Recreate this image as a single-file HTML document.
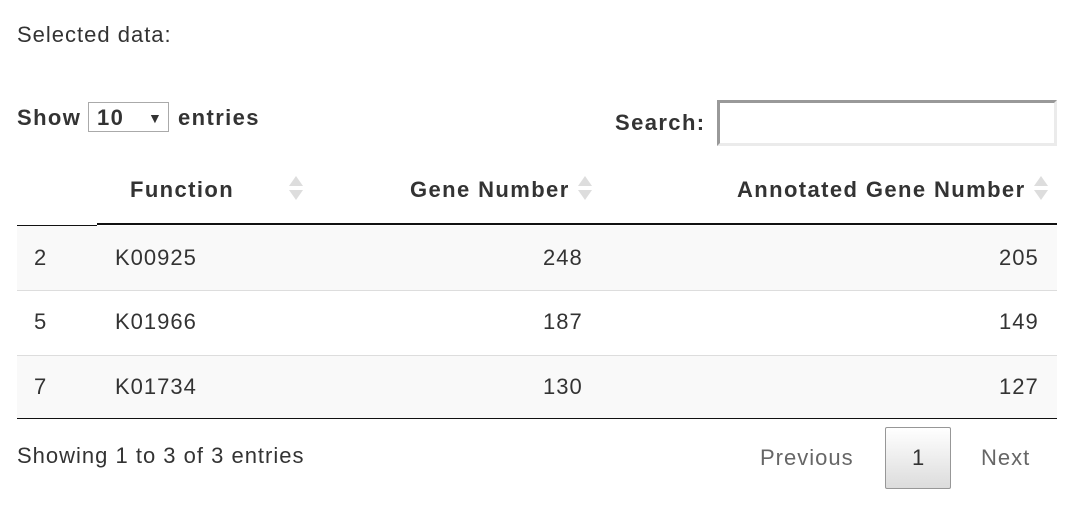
<!DOCTYPE html>
<html><head><style>
body{margin:0;width:1088px;height:519px;background:#fff;font-family:"Liberation Sans",sans-serif;color:#333;position:relative;overflow:hidden}
.a{position:absolute;white-space:nowrap;font-size:22px;line-height:26px;letter-spacing:1px}
b{font-weight:bold;letter-spacing:1.4px}
.row{position:absolute;left:17px;width:1040px;height:64px}
.s{position:absolute;width:0;height:0;border-left:7px solid transparent;border-right:7px solid transparent}
.u{border-bottom:10px solid #ddd}.d{border-top:10px solid #ddd}
</style></head><body>
<div class="a" style="left:17px;top:22px">Selected data:</div>
<div class="a" style="left:17px;top:105px"><b>Show</b></div>
<div style="position:absolute;left:88px;top:102px;width:81px;height:30px;border:1px solid #aaa;box-sizing:border-box"></div>
<div class="a" style="left:97px;top:105px"><b>10</b></div>
<div class="a" style="left:148px;top:105px;font-size:14px">▼</div>
<div class="a" style="left:178px;top:105px"><b>entries</b></div>
<div class="a" style="left:615px;top:110px"><b>Search:</b></div>
<div style="position:absolute;left:717px;top:100px;width:340px;height:46px;box-sizing:border-box;border:3px solid #ebebeb;border-top-color:#999;border-left-color:#999"></div>
<div class="a" style="left:130px;top:177px"><b>Function</b></div>
<div class="a" style="left:410px;top:177px"><b>Gene Number</b></div>
<div class="a" style="left:737px;top:177px"><b>Annotated Gene Number</b></div>
<div class="s u" style="left:289px;top:176px"></div><div class="s d" style="left:289px;top:190px"></div>
<div class="s u" style="left:578px;top:176px"></div><div class="s d" style="left:578px;top:190px"></div>
<div class="s u" style="left:1034px;top:176px"></div><div class="s d" style="left:1034px;top:190px"></div>
<div style="position:absolute;left:17px;width:80px;height:2px;background:#111;top:225px"></div>
<div style="position:absolute;left:97px;top:223px;width:960px;height:2px;background:#111"></div>
<div class="row" style="top:226px;background:#f9f9f9;border-bottom:1px solid #ddd"></div>
<div class="row" style="top:291px;border-bottom:1px solid #ddd"></div>
<div class="row" style="top:356px;height:62px;background:#f9f9f9;border-bottom:1px solid #111"></div>
<div class="a" style="left:34px;top:245px">2</div><div class="a" style="left:115px;top:245px">K00925</div><div class="a" style="left:543px;top:245px">248</div><div class="a" style="left:999px;top:245px">205</div>
<div class="a" style="left:34px;top:309px">5</div><div class="a" style="left:115px;top:309px">K01966</div><div class="a" style="left:543px;top:309px">187</div><div class="a" style="left:999px;top:309px">149</div>
<div class="a" style="left:34px;top:374px">7</div><div class="a" style="left:115px;top:374px">K01734</div><div class="a" style="left:543px;top:374px">130</div><div class="a" style="left:999px;top:374px">127</div>
<div class="a" style="left:17px;top:443px">Showing 1 to 3 of 3 entries</div>
<div class="a" style="left:760px;top:445px;color:#666">Previous</div>
<div style="position:absolute;left:885px;top:427px;width:66px;height:62px;box-sizing:border-box;border:1px solid #979797;border-radius:2px;background:linear-gradient(#fff,#dcdcdc)"></div>
<div class="a" style="left:912px;top:445px">1</div>
<div class="a" style="left:981px;top:445px;color:#666">Next</div>
</body></html>
